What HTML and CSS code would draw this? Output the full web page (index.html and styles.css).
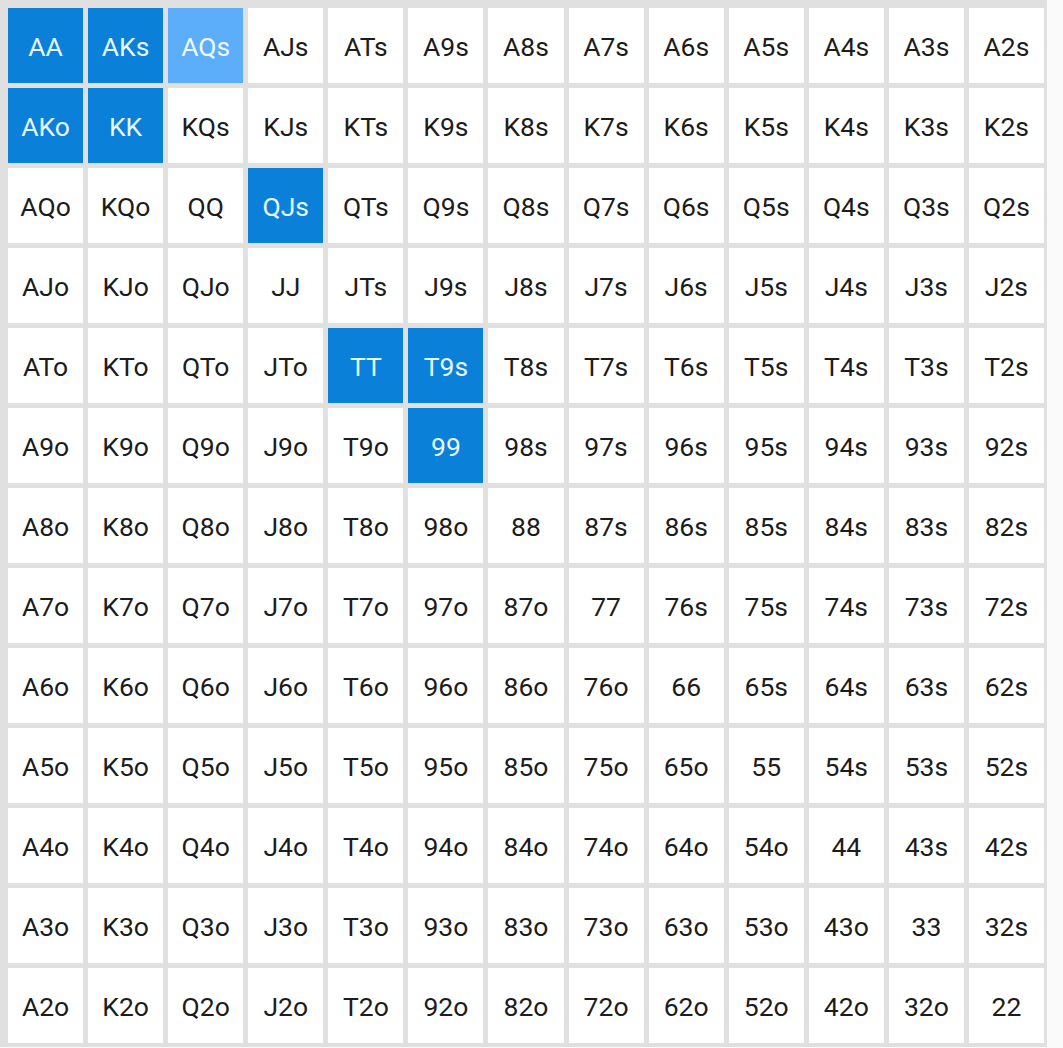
FILE: index.html
```html
<!DOCTYPE html>
<html>
<head>
<meta charset="utf-8">
<link rel="stylesheet" href="styles.css">
</head>
<body>
<div class="grid" id="grid"></div>
<script>
const r = ['A','K','Q','J','T','9','8','7','6','5','4','3','2'];
const dark = ['AA','AKs','AKo','KK','QJs','TT','T9s','99'];
const light = ['AQs'];
const g = document.getElementById('grid');
for (let i = 0; i < 13; i++) {
  for (let j = 0; j < 13; j++) {
    let t;
    if (i === j) t = r[i] + r[j];
    else if (j > i) t = r[i] + r[j] + 's';
    else t = r[j] + r[i] + 'o';
    const d = document.createElement('div');
    d.className = 'cell' + (dark.includes(t) ? ' dark' : light.includes(t) ? ' light' : '');
    d.textContent = t;
    g.appendChild(d);
  }
}
</script>
</body>
</html>
```

FILE: styles.css
```css
html, body {
  margin: 0;
  padding: 0;
  background: #fafafa;
}
.grid {
  width: 1047px;
  height: 1047px;
  box-sizing: border-box;
  padding: 8px 3px 4px 8px;
  background: #e0e0e0;
  display: grid;
  grid-template-columns: repeat(13, 1fr);
  grid-template-rows: repeat(13, 1fr);
  gap: 5px;
}
.cell {
  background: #ffffff;
  display: flex;
  align-items: center;
  justify-content: center;
  padding-top: 2px;
  font-family: Roboto, "Noto Sans", sans-serif;
  font-size: 26.5px;
  font-weight: 400;
  color: #1c1c1c;
}
.cell.dark {
  background: #0a80d8;
  color: #e8f6ff;
}
.cell.light {
  background: #5caefa;
  color: #eef8ff;
}
```
